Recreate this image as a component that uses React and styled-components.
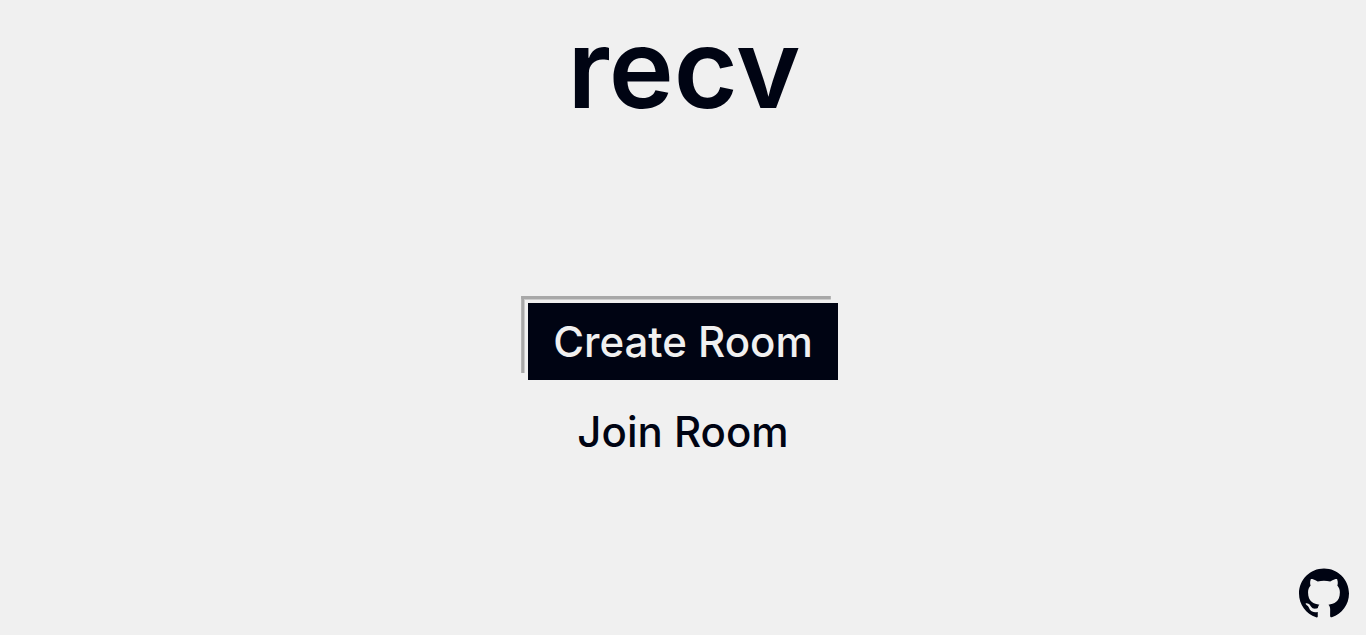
import React from "react";
import styled, { createGlobalStyle } from "styled-components";
import { SiGithub } from "react-icons/si";

const ink = "#000413";
const paper = "#f0f0f0";

const GlobalStyle = createGlobalStyle`
  *, *::before, *::after { box-sizing: border-box; }
  body {
    margin: 0;
    background: ${paper};
    color: ${ink};
    font-family: Inter, sans-serif;
  }
`;

const Page = styled.div`
  display: flex;
  flex-direction: column;
  min-height: 100vh;
`;

const Header = styled.header`
  display: flex;
  justify-content: center;
  padding: 0 0 2px 2px;
`;

const Title = styled.h1`
  margin: 0;
  font-size: 110px;
  line-height: 136px;
  font-weight: 600;
`;

const Menu = styled.main`
  flex: 1;
  display: flex;
  flex-direction: column;
  align-items: center;
  justify-content: center;
  gap: 13px;
`;

const MenuButton = styled.button`
  position: relative;
  border: 0;
  padding: 12px 25px;
  background: ${(p) => (p.$active ? ink : "transparent")};
  color: ${(p) => (p.$active ? paper : ink)};
  font-family: inherit;
  font-size: 42px;
  line-height: 53px;
  font-weight: 500;
  cursor: pointer;

  &::before {
    content: "";
    display: ${(p) => (p.$active ? "block" : "none")};
    position: absolute;
    inset: -7px 7px 7px -7px;
    border: 3px solid #a8a8a8;
    border-right: 0;
    border-bottom: 0;
    box-shadow: inset 1px 1px 0 #cccccc;
    clip-path: polygon(0 0, 100% 0, 100% 4px, 4px 4px, 4px 100%, 0 100%);
  }
`;

const RepoLink = styled.a`
  position: fixed;
  right: 17px;
  bottom: 17px;
  display: flex;
  color: inherit;
`;

export default function App() {
  return (
    <Page>
      <GlobalStyle />
      <Header>
        <Title>recv</Title>
      </Header>
      <Menu>
        <MenuButton type="button" $active>Create Room</MenuButton>
        <MenuButton type="button">Join Room</MenuButton>
      </Menu>
      <RepoLink href="#github" aria-label="GitHub">
        <SiGithub size={50} />
      </RepoLink>
    </Page>
  );
}
